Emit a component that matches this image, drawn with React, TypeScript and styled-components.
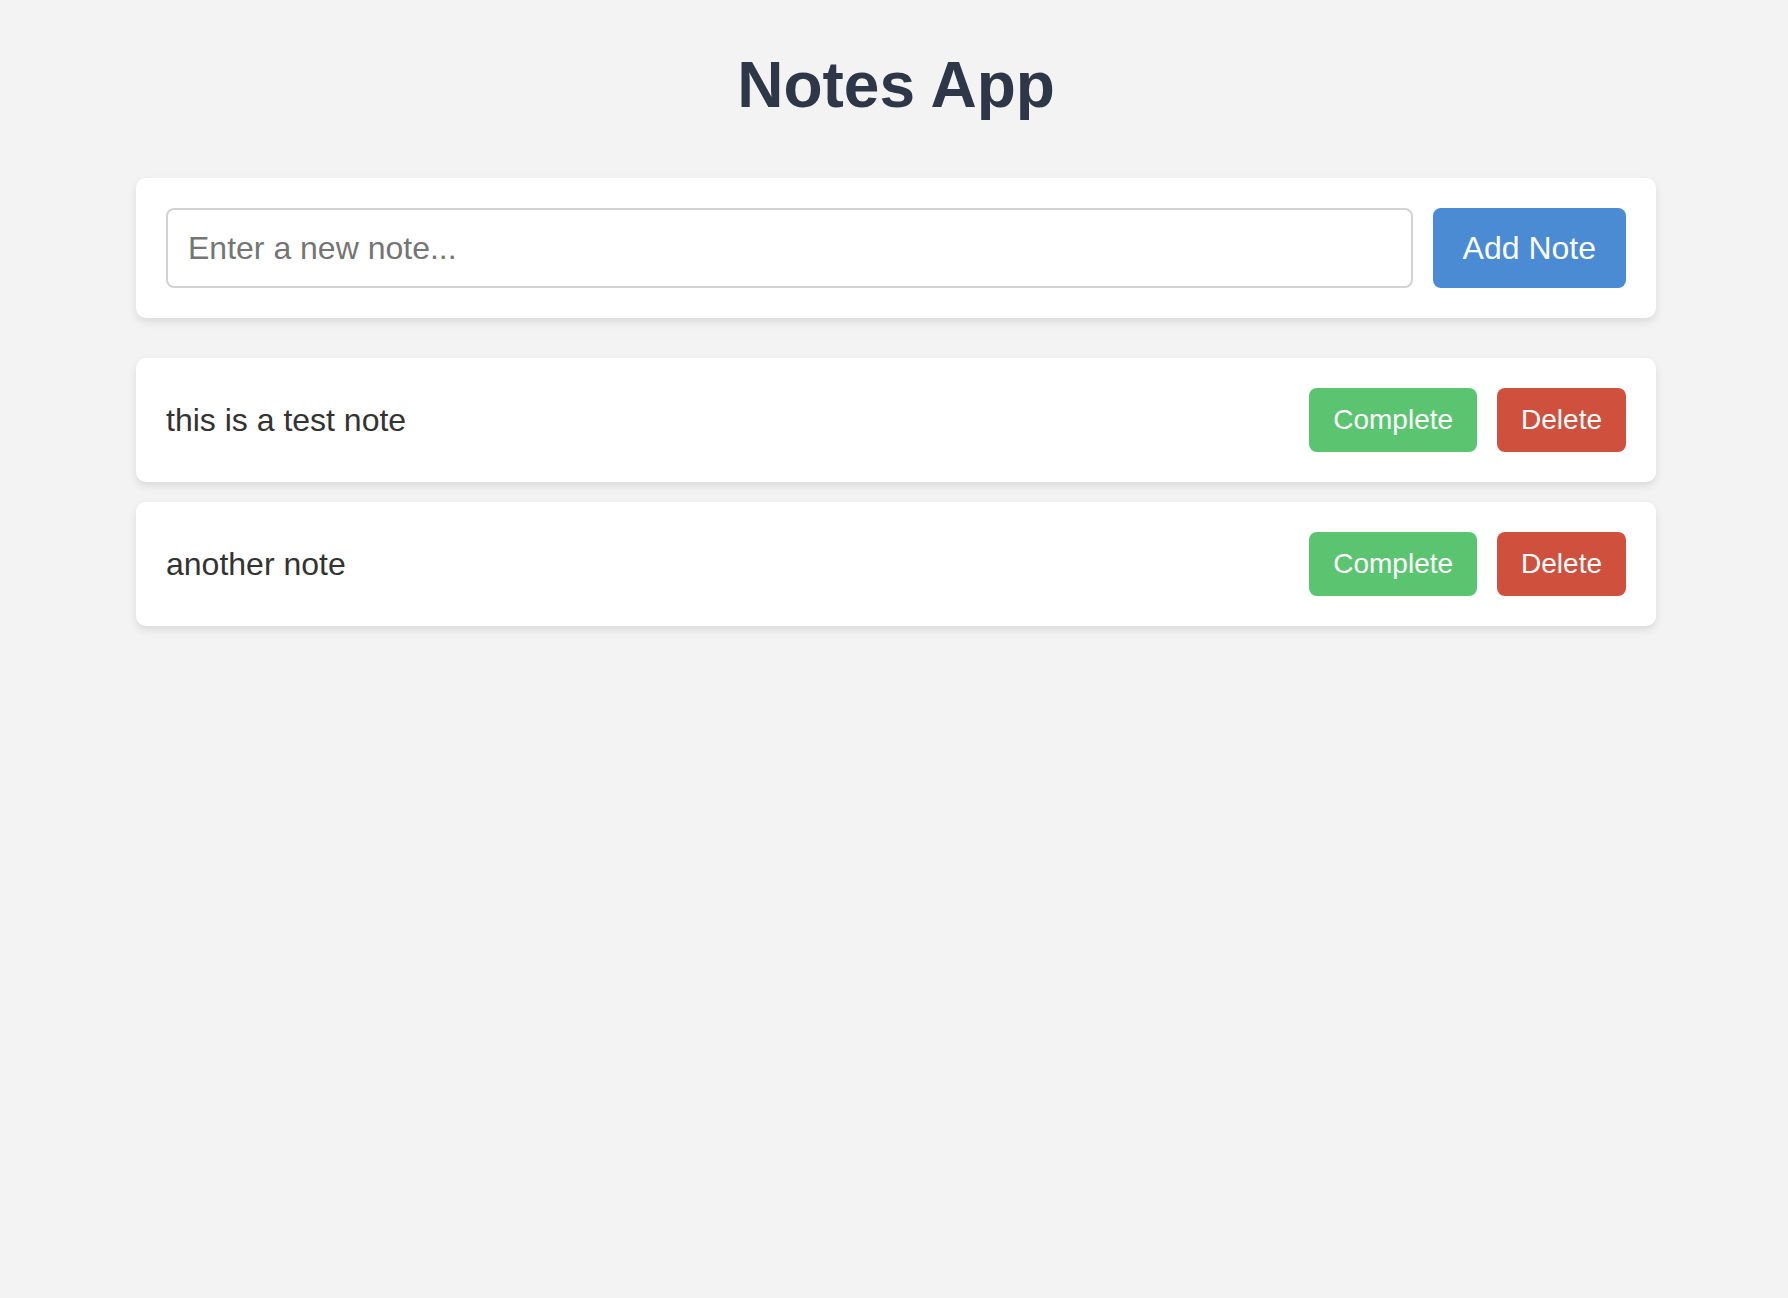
import { useState, FormEvent } from 'react';
import styled, { createGlobalStyle } from 'styled-components';

const GlobalStyle = createGlobalStyle`
  html, body {
    margin: 0;
    padding: 0;
    background: #f3f3f3;
  }

  body {
    font-family: "Liberation Sans", Arial, Helvetica, sans-serif;
    color: #333;
  }

  * {
    box-sizing: border-box;
  }
`;

const Container = styled.main`
  max-width: 1600px;
  margin: 0 auto;
  padding: 48px 38px 40px 42px;
`;

const Title = styled.h1`
  margin: 0 0 56px;
  text-align: center;
  font-size: 64px;
  font-weight: 700;
  color: #2d3748;
`;

const Card = styled.div`
  background: #fff;
  border-radius: 10px;
  padding: 30px;
  box-shadow: 0 4px 8px rgba(0, 0, 0, 0.1);
`;

const NoteForm = styled(Card).attrs({ as: 'form' })`
  display: flex;
  gap: 20px;
  margin-bottom: 40px;
`;

const NoteInput = styled.input`
  flex: 1;
  height: 80px;
  padding: 0 20px;
  border: 2px solid #d3d3d3;
  border-radius: 8px;
  font-family: inherit;
  font-size: 32px;
  color: #333;
  outline: none;

  &::placeholder {
    color: #757575;
  }
`;

const Button = styled.button<{ $color: string }>`
  border: none;
  border-radius: 8px;
  background: ${({ $color }) => $color};
  color: #fff;
  font-family: inherit;
  cursor: pointer;
`;

const AddButton = styled(Button)`
  padding: 0 30px;
  font-size: 32px;
`;

const NoteItem = styled(Card)`
  display: flex;
  align-items: center;
  justify-content: space-between;
  margin-bottom: 20px;
`;

const NoteText = styled.span<{ $done: boolean }>`
  font-size: 32px;
  color: #333;
  text-decoration: ${({ $done }) => ($done ? 'line-through' : 'none')};
  opacity: ${({ $done }) => ($done ? 0.6 : 1)};
`;

const Actions = styled.div`
  display: flex;
  gap: 20px;
`;

const SmallButton = styled(Button)`
  padding: 0 24px;
  height: 64px;
  font-size: 28px;
`;

interface Note {
  id: number;
  text: string;
  done: boolean;
}

export default function App() {
  const [notes, setNotes] = useState<Note[]>([
    { id: 1, text: 'this is a test note', done: false },
    { id: 2, text: 'another note', done: false },
  ]);
  const [draft, setDraft] = useState('');

  function handleSubmit(e: FormEvent) {
    e.preventDefault();
    if (!draft.trim()) return;

    setNotes([...notes, { id: Date.now(), text: draft.trim(), done: false }]);
    setDraft('');
  }

  function toggleNote(id: number) {
    setNotes(notes.map((note) => (note.id === id ? { ...note, done: !note.done } : note)));
  }

  function deleteNote(id: number) {
    setNotes(notes.filter((note) => note.id !== id));
  }

  return (
    <>
      <GlobalStyle />
      <Container>
        <Title>Notes App</Title>

        <NoteForm onSubmit={handleSubmit}>
          <NoteInput
            value={draft}
            onChange={(e) => setDraft(e.target.value)}
            placeholder="Enter a new note..."
          />
          <AddButton type="submit" $color="#4a8bd4">Add Note</AddButton>
        </NoteForm>

        {notes.map((note) => (
          <NoteItem key={note.id}>
            <NoteText $done={note.done}>{note.text}</NoteText>
            <Actions>
              <SmallButton $color="#5bc470" onClick={() => toggleNote(note.id)}>
                Complete
              </SmallButton>
              <SmallButton $color="#d0503e" onClick={() => deleteNote(note.id)}>
                Delete
              </SmallButton>
            </Actions>
          </NoteItem>
        ))}
      </Container>
    </>
  );
}
